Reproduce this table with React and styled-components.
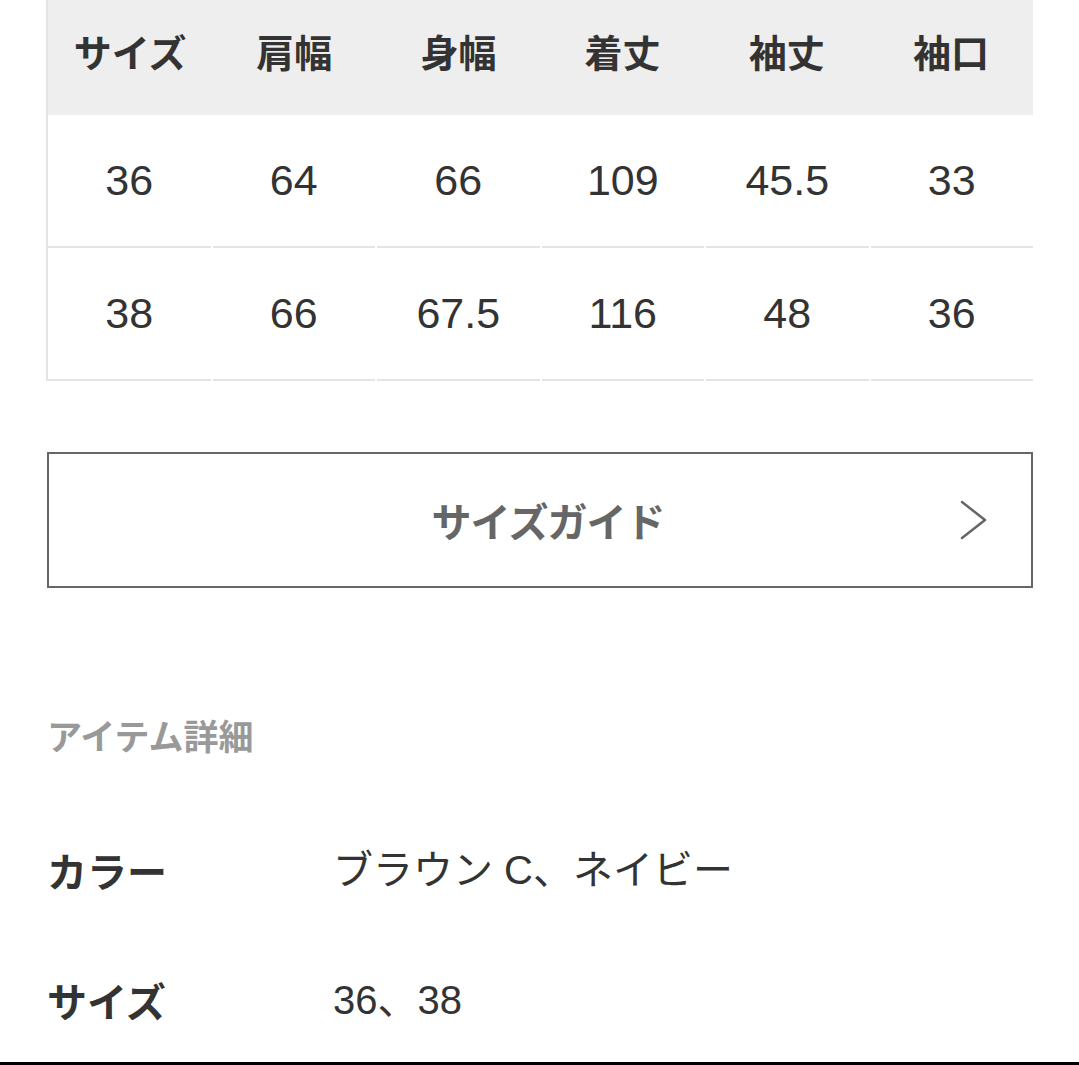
import React from 'react'
import styled, { createGlobalStyle } from 'styled-components'

const GlobalStyle = createGlobalStyle`
  body {
    margin: 0;
    background: #fff;
    font-family: "Liberation Sans", "Noto Sans CJK JP", sans-serif;
    color: #333;
  }
`

const Page = styled.div`
  width: 1079px;
  height: 1065px;
  overflow: hidden;
  display: flex;
  flex-direction: column;
`

const Content = styled.div`
  padding: 0 46px 0 47px;
  display: flex;
  flex-direction: column;
  flex: 1;
`

const Table = styled.div`
  display: flex;
  flex-direction: column;
  border-left: 2px solid #e4e4e4;
  margin-left: -1px;
`

const Row = styled.div`
  display: grid;
  grid-template-columns: repeat(6, 1fr);
  column-gap: ${(p) => (p.$head ? '0' : '2px')};
  height: ${(p) => (p.$head ? '115px' : '133px')};
  background: ${(p) => (p.$head ? '#eeeeee' : '#fff')};
`

const Cell = styled.div`
  display: flex;
  align-items: center;
  justify-content: center;
  box-sizing: border-box;
  border-bottom: ${(p) => (p.$head ? 'none' : '2px solid #e4e4e4')};
  padding-bottom: ${(p) => (p.$head ? '15px' : '0')};
  font-family: ${(p) =>
    p.$head ? '"Noto Sans CJK JP", sans-serif' : '"Liberation Sans", sans-serif'};
  font-weight: ${(p) => (p.$head ? 700 : 400)};
  font-size: ${(p) => (p.$head ? '38px' : '43px')};
  color: #333;
`

const GuideButton = styled.div`
  margin-top: 71px;
  height: 136px;
  box-sizing: border-box;
  border: 2px solid #666;
  display: grid;
  grid-template-columns: 1fr auto 1fr;
  align-items: center;
  padding: 0 44px 0 60px;
`

const GuideLabel = styled.span`
  grid-column: 2;
  font-family: "Noto Sans CJK JP", sans-serif;
  font-weight: 700;
  font-size: 40px;
  color: #666;
  letter-spacing: -1px;
`

const Chevron = styled.svg`
  grid-column: 3;
  justify-self: end;
`

const SectionTitle = styled.h2`
  margin: 122px 0 0;
  line-height: 50px;
  font-family: "Noto Sans CJK JP", sans-serif;
  font-weight: 700;
  font-size: 35px;
  color: #999;
`

const DetailList = styled.dl`
  margin: 45px 0 0;
  display: flex;
  flex-direction: column;
`

const DetailRow = styled.div`
  display: grid;
  grid-template-columns: 286px 1fr;
  align-items: start;
  height: 130px;
  padding-top: 40px;
  box-sizing: border-box;
  &:last-child {
    height: 127px;
  }
`

const Term = styled.dt`
  line-height: 50px;
  font-family: "Noto Sans CJK JP", sans-serif;
  font-weight: 700;
  font-size: 40px;
  color: #333;
`

const Desc = styled.dd`
  margin: 0;
  line-height: 50px;
  font-family: "Liberation Sans", "Noto Sans CJK JP", sans-serif;
  font-size: 40px;
  color: #333;
`

const Rule = styled.div`
  height: 3px;
  background: #000;
`

const headers = ['サイズ', '肩幅', '身幅', '着丈', '袖丈', '袖口']
const rows = [
  ['36', '64', '66', '109', '45.5', '33'],
  ['38', '66', '67.5', '116', '48', '36'],
]

const details = [
  { label: 'カラー', value: 'ブラウン C、ネイビー' },
  { label: 'サイズ', value: '36、38' },
]

const App = () => {
  return (
    <Page>
      <GlobalStyle />
      <Content>
        <Table>
          <Row $head>
            {headers.map((h) => (
              <Cell $head key={h}>{h}</Cell>
            ))}
          </Row>
          {rows.map((r, i) => (
            <Row key={i}>
              {r.map((v, j) => (
                <Cell key={j}>{v}</Cell>
              ))}
            </Row>
          ))}
        </Table>

        <GuideButton>
          <GuideLabel>サイズガイド</GuideLabel>
          <Chevron width="27" height="40" viewBox="0 0 27 40">
            <polyline
              points="2,2 25,20 2,38"
              fill="none"
              stroke="#666"
              strokeWidth="2.5"
              strokeLinecap="round"
              strokeLinejoin="round"
            />
          </Chevron>
        </GuideButton>

        <SectionTitle>アイテム詳細</SectionTitle>

        <DetailList>
          {details.map((d) => (
            <DetailRow key={d.label}>
              <Term>{d.label}</Term>
              <Desc>{d.value}</Desc>
            </DetailRow>
          ))}
        </DetailList>
      </Content>
      <Rule />
    </Page>
  )
}

export default App
